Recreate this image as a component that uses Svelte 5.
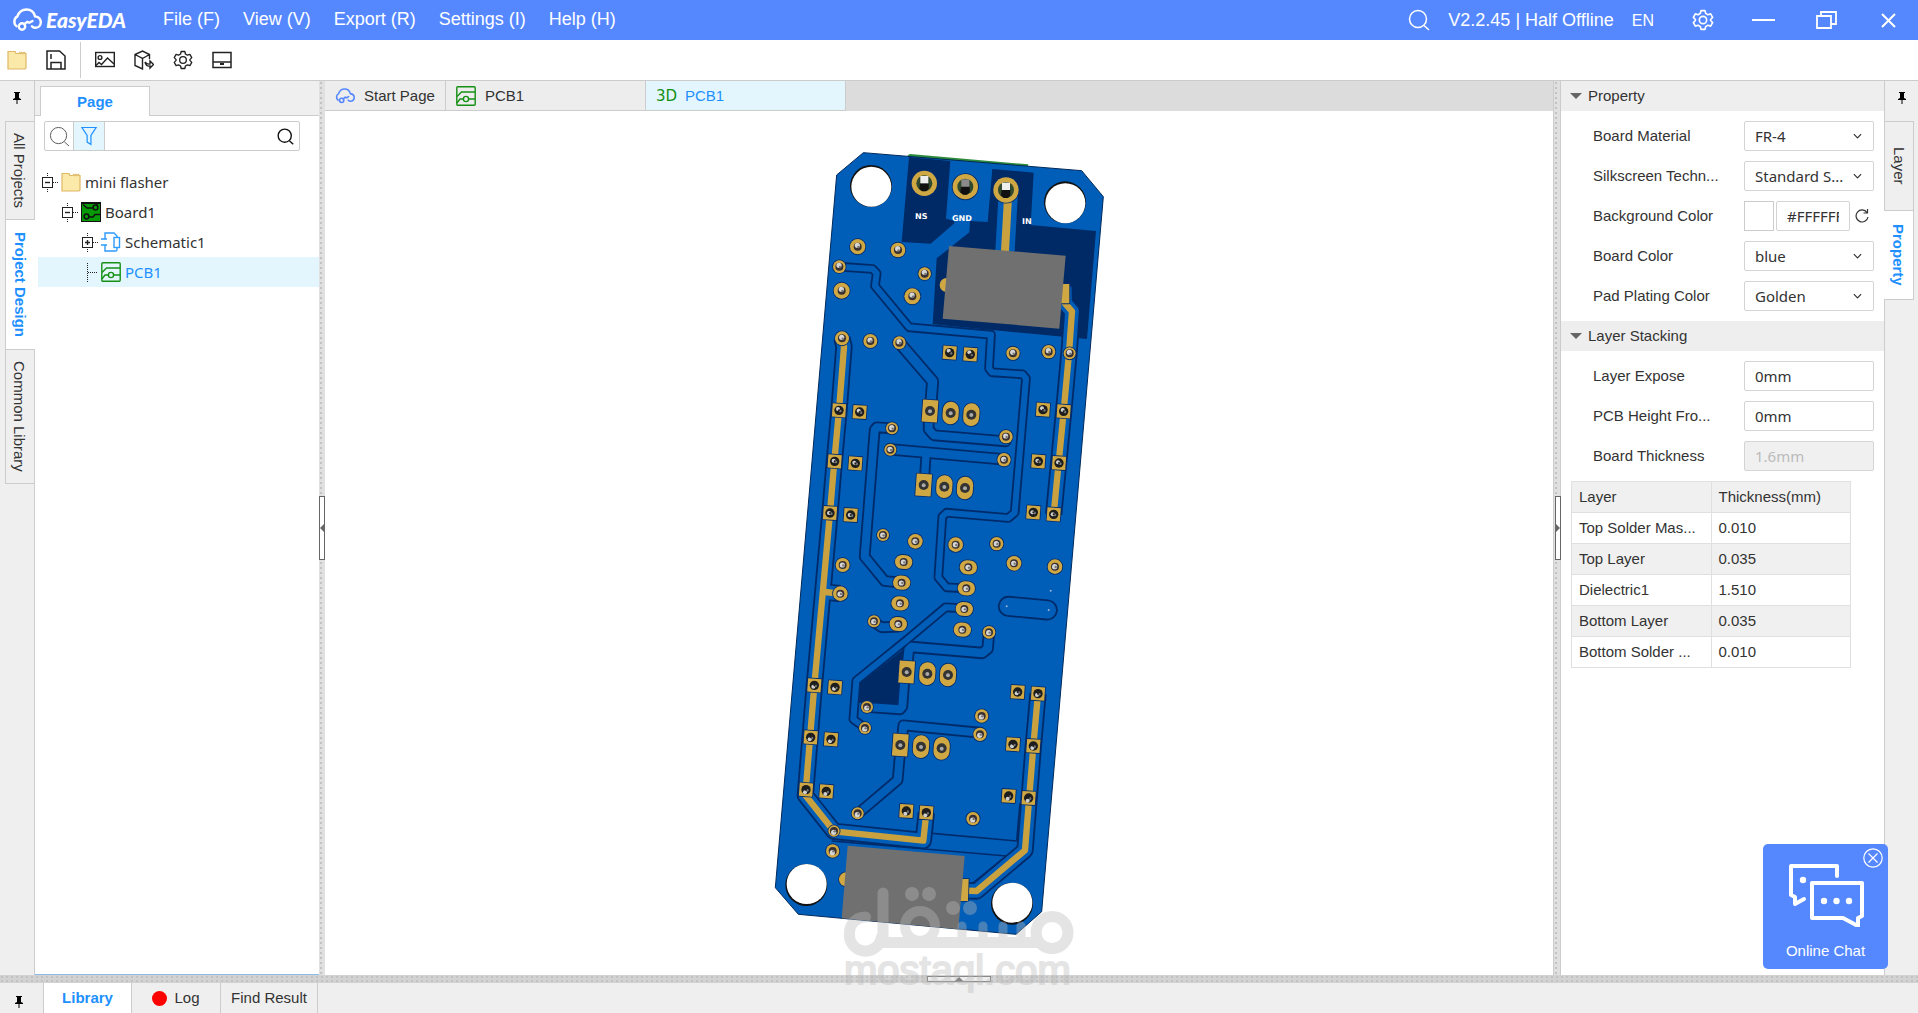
<script>
  const menus = ['File (F)', 'View (V)', 'Export (R)', 'Settings (I)', 'Help (H)'];

  const boardFields = [
    { id: 'material', label: 'Board Material', value: 'FR-4' },
    { id: 'silk', label: 'Silkscreen Techn...', value: 'Standard S...' },
    { id: 'background', label: 'Background Color', color: '#FFFFFF' },
    { id: 'color', label: 'Board Color', value: 'blue' },
    { id: 'plating', label: 'Pad Plating Color', value: 'Golden' }
  ];
  const stackFields = [
    { id: 'expose', label: 'Layer Expose', value: '0mm' },
    { id: 'height', label: 'PCB Height Fro...', value: '0mm' },
    { id: 'thickness', label: 'Board Thickness', value: '1.6mm', disabled: true }
  ];
  const layers = [
    ['Top Solder Mas...', '0.010'],
    ['Top Layer', '0.035'],
    ['Dielectric1', '1.510'],
    ['Bottom Layer', '0.035'],
    ['Bottom Solder ...', '0.010']
  ];

  // Board geometry, in thirds of a pixel
  const traces = [
    { w: 24, p: '238,380 338,387 350,400 345,438 448,562 693,584 687,685 696,697 788,703 798,715 764,1118 745,1134 560,1118 547,1130 535,1312 560,1342 618,1345' },
    { w: 34, p: '418,608 518,724 512,800' },
    { w: 30, p: '506,800 506,868 522,886 737,904' },
    { w: 30, p: '396,865 350,862 344,870 314,1250 374,1323 425,1328' },
    { w: 32, p: '391,928 732,958' },
    { w: 28, p: '498,945 492,1040' },
    { w: 24, p: '610,1405 557,1402 440,1500 289,1622 280,1738 315,1763' },
    { w: 32, p: '687,1475 683,1526 667,1539 455,1521 446,1530 440,1590' },
    { w: 30, p: '433,1620 427,1700 420,1708 320,1701' },
    { w: 30, p: '660,1778 430,1756 424,1815' },
    { w: 30, p: '420,1840 413,1920 295,2020' },
    { w: 30, p: '345,1448 365,1462 415,1460' },
    { w: 58, p: '745,1399 862,1410' }
  ];
  const goldTraces = [
    '246,595 252,620 237,811 223,963 210,1118 163,1636 136,1966 222,2074 490,2102 499,2018',
    '195,1356 240,1361',
    '914,440 915,490 936,514 927,640 911,814 881,1123',
    '834,1661 820,1818 795,2131 650,2253 615,2252'
  ];
  const ground = [
    '517,2000 517,2080 770,2103 780,1990',
    '215,2103 740,2148 640,2228'
  ];
  const vias = [
    [293,320,23],[414,330,22],[238,380,19],[245,452,24],[494,401,19],[457,469,24],[246,595,21],[331,603,21],[418,608,19],
    [759,640,20],[866,635,20],[929,640,18],[396,865,18],[391,929,18],[738,890,20],[732,959,20],[369,1185,18],[466,1204,22],
    [587,1214,22],[710,1211,20],[762,1270,22],[885,1280,22],[248,1275,21],[241,1361,22],[342,1444,18],[687,1477,19],
    [321,1701,18],[315,1764,18],[665,1728,20],[660,1783,20],[293,2020,18],[639,2036,20],[222,2073,17],[218,2133,20]
  ];
  const squares = [
    [569,638],[631,643],[237,811],[299,816],[849,809],[911,814],[224,964],[286,970],[835,964],[897,969],[210,1119],[272,1125],
    [820,1117],[881,1123],[163,1636],[225,1642],[152,1792],[213,1798],[138,1949],[199,1954],[773,1656],[834,1661],[759,1813],
    [820,1818],[746,1968],[806,1974],[439,2013],[499,2018]
  ];
  const wide = [[431,1266],[425,1328],[420,1390],[415,1452],[625,1282],[619,1345],[613,1407],[607,1469]];
  const tallSquare = [[510,813],[491,1035],[440,1596],[421,1815]];
  const tallRound = [[572,819],[634,824],[553,1040],[615,1044],[502,1601],[564,1605],[483,1820],[545,1825]];
  const pins = [[493,130],[616,140],[738,150]];
  const holes = [[333,138,-5],[915,187,-5],[139,2235,6],[756,2291,6]];
  // Lead ends drift from the top to the bottom of the drill with perspective
  const drift = (y) => Math.round((y - 1200) / 200);
</script>

{#snippet cloud()}
  <svg class="cloud" viewBox="0 0 30 24" fill="none" stroke="currentColor" stroke-width="2.4" stroke-linecap="round">
    <path d="M4.500 18.200A6 6 0 0 1 5.400 8.400C7 3.600 11 1.500 14.500 1.500c4.500 0 7.500 2.800 8.500 6.900 3.600.6 5.800 3 5.800 6 0 3.200-2.400 5.400-5.900 5.400-1.200 0-2.200-.6-3-1.500" />
    <circle cx="10" cy="18.500" r="3.200" />
    <path d="m12.300 16.300 3-2.400 2 .800 3.200-1.700" />
  </svg>
{/snippet}
{#snippet lens()}
  <svg class="lens" viewBox="0 0 22 22" fill="none" stroke="currentColor"><circle cx="10" cy="10" r="8.500" /><path d="m16 16.500 5 4.500" /></svg>
{/snippet}
{#snippet gear()}
  <svg class="gear" viewBox="0 0 24 24" fill="none" stroke="currentColor" stroke-linejoin="round">
    <path d="M9.800 1.800h4.400l.7 3 2.400 1.400 3-.9 2.200 3.800-2.200 2.400v1l2.200 2.400-2.200 3.800-3-.9-2.400 1.400-.7 3H9.800l-.7-3-2.400-1.400-3 .9-2.200-3.800 2.200-2.400v-1L1.500 9.100l2.200-3.800 3 .9 2.400-1.400z" />
    <circle cx="12" cy="12" r="4" />
  </svg>
{/snippet}
{#snippet pin()}
  <svg class="pin" viewBox="0 0 8 12"><path d="M1 0h6v1H6v5l2 1v1H4.500v4h-1V8H0V7l2-1V1H1z" /></svg>
{/snippet}
{#snippet folder()}
  <svg class="ico" viewBox="0 0 20 20"><path d="M1 1.500h7l1 2h3l.8-1 .8 1 .8-1 .8 1 .8-1 .8 1 .8-1 .7 1H19V18l-1 1H1z" fill="#fae9a8" stroke="#dfb765" stroke-width="1.200" /></svg>
{/snippet}
{#snippet pcb()}
  <svg class="ico" viewBox="0 0 20 20" fill="none" stroke="#159015" stroke-width="1.400"><rect x=".8" y=".8" width="18.400" height="18.400" rx="1" /><path d="M1 10.500 5.500 6H19M1 17l3-4h3.500M12.500 13H19" /><circle cx="10" cy="13" r="2.600" /></svg>
{/snippet}
{#snippet toggle(open)}
  <button class="toggle" aria-label={open ? 'Collapse' : 'Expand'}>
    <svg viewBox="0 0 17 19" fill="none" stroke="#222"><path d="M6.500 0v19M12 9.500h5" stroke-dasharray="1 1" /><rect x="1.500" y="4.500" width="10" height="10" fill="#fff" /><path d={open ? 'M4 9.500h5' : 'M4 9.500h5M6.500 7v5'} stroke-width="1.400" /></svg>
  </button>
{/snippet}
{#snippet bore(x, y, r)}
  <circle cx={x} cy={y} {r} fill="#3a3030" />
  <circle cx={x - 1} cy={y + drift(y)} r={r * 0.65} fill="#d6d6d6" />
  <circle cx={x + 2} cy={y + 1} r={r * 0.3} fill="#777" />
{/snippet}

<div class="app">
  <header class="titlebar">
    <div class="brand">{@render cloud()}<span>EasyEDA</span></div>
    <nav>{#each menus as m}<button>{m}</button>{/each}</nav>
    <div class="status">
      <button aria-label="Search">{@render lens()}</button>
      <span class="version">V2.2.45 | Half Offline</span>
      <button class="lang">EN</button>
    </div>
    <div class="window">
      <button aria-label="Preferences">{@render gear()}</button>
      <button aria-label="Minimize"><svg viewBox="0 0 24 24" stroke="#fff" stroke-width="2"><path d="M0 12h23" /></svg></button>
      <button aria-label="Restore"><svg viewBox="0 0 24 24" stroke="#fff" stroke-width="1.800" fill="none"><path d="M3 8h14v12H3zM7 8V4h15v12h-5" /></svg></button>
      <button aria-label="Close"><svg viewBox="0 0 24 24" stroke="#fff" stroke-width="2"><path d="m6 6 13 13M19 6 6 19" /></svg></button>
    </div>
  </header>

  <div class="toolbar">
    <button aria-label="Open">{@render folder()}</button>
    <button aria-label="Save"><svg class="ico" viewBox="0 0 20 20" fill="none" stroke="#222" stroke-width="1.500"><path d="M1 1h12.500L19 6v13H1zM5 19v-6.500h10V19M5 4v5" /></svg></button>
    <i class="rule"></i>
    <button aria-label="Export image"><svg class="ico" viewBox="0 0 20 20" fill="none" stroke="#222" stroke-width="1.400"><rect x=".7" y="2.500" width="18.600" height="14" /><circle cx="5" cy="7.500" r="1.900" /><path d="m1 15.500 3-3 2.500 2L12.500 8 19 14" /></svg></button>
    <button aria-label="Export 3D"><svg class="ico" viewBox="0 0 20 20" fill="none" stroke="#222" stroke-width="1.400"><path d="M15.500 9V4.500L8.500 1 1 4.500v11L8.500 19V8.500L1 4.500M8.500 8.500l7-4M11 12c1.500 2 3 2.500 5 2V11l3.500 3.500L16 18v-2c-2.500.5-4.500-.5-5-4" /></svg></button>
    <button aria-label="Settings">{@render gear()}</button>
    <button aria-label="Bottom panel"><svg class="ico" viewBox="0 0 20 20" fill="none" stroke="#222" stroke-width="1.500"><rect x="1" y="2.500" width="18" height="15" /><path d="M1 12h18" /><path d="M8 14h4" stroke-width="2" /></svg></button>
  </div>

  <main>
    <aside class="rail left">
      <button class="pinbox" aria-label="Pin panel">{@render pin()}</button>
      <button class="vtab projects">All Projects</button>
      <button class="vtab active design">Project Design</button>
      <button class="vtab library">Common Library</button>
      <div class="rest"></div>
    </aside>

    <section class="pages">
      <div class="pagetabs"><button>Page</button></div>
      <div class="search">
        <button aria-label="Find">{@render lens()}</button>
        <button class="filter" aria-label="Filter"><svg viewBox="0 0 18 20" fill="none" stroke="#1e90ff" stroke-width="1.300"><path d="M1 1h15l-5.500 8.500V19l-4-2.500v-7z" /></svg></button>
        <input aria-label="Search pages" />
        <button class="go" aria-label="Search pages now">{@render lens()}</button>
      </div>
      <ul class="tree">
        <li class="d0">{@render toggle(true)}{@render folder()}<span>mini flasher</span></li>
        <li class="d1">{@render toggle(true)}<svg class="ico" viewBox="0 0 20 20"><rect width="20" height="20" fill="#111" /><rect x="1" y="2" width="18" height="17" fill="#079a07" /><g fill="none" stroke="#111" stroke-width="1.500"><path d="M2 2.500 6 6h6M8 15h4l2-2.500h5M16 3V2" /><circle cx="14.500" cy="5.500" r="2.400" /><circle cx="5.500" cy="14.500" r="2.400" /></g></svg><span>Board1</span></li>
        <li class="d2">{@render toggle(false)}<svg class="ico" viewBox="0 0 20 20" fill="none" stroke="#2e9bff" stroke-width="1.400"><path d="M4 7V1h9l3 3v1.500M4 13v6h11l1-1v-2.500M0 7h6M0 13h6" /><rect x="13" y="5.500" width="5.500" height="10" /></svg><span>Schematic1</span></li>
        <li class="d2 selected"><svg class="branch" viewBox="0 0 17 19" fill="none" stroke="#222" stroke-dasharray="1 1"><path d="M6.500 0v19M7 9.500h10" /></svg>{@render pcb()}<span>PCB1</span></li>
      </ul>
    </section>

    <div class="split"><button class="grip" aria-label="Collapse left panel"><svg viewBox="0 0 5 10"><path d="M5 0v10L0 5z" fill="#666" /></svg></button></div>

    <section class="editor">
      <div class="doctabs">
        <button class="start">{@render cloud()}<span>Start Page</span></button>
        <button>{@render pcb()}<span>PCB1</span></button>
        <button class="current"><b>3D</b><span>PCB1</span></button>
      </div>
      <svg class="canvas" viewBox="325 111 1228 864" role="img" aria-label="3D view of the board">
        <g transform="translate(760 140) scale(.33333)" stroke-linejoin="round">
          <path d="M443 46 450 42 805 73 804 80 443 54z" fill="#2d8c3c" />
          <path d="M310 38 965 92l65 78L845 2315l-77 68-653-60-69-80L230 105z" fill="#005eb8" stroke="#00285a" stroke-width="3" />
          <g fill="#002a66">
            <path d="M447 51 571 63 558 236 582 242 583 250 512 311 425 306z" />
            <path d="M697 87 821 98 812 255 1008 273 981 597 518 553 530 355 628 277 630 243 683 246z" />
            <path d="M435 1525 300 1630 297 1688 417 1695 422 1620z" />
          </g>
          <g fill="none" stroke="#002b6a" stroke-width="5">{#each ground as p}<polyline points={p} />{/each}</g>
          <g fill="none" stroke="#002b6a">
            {#each traces as t}<polyline points={t.p} stroke-width={t.w + 5} stroke-linecap="round" />{/each}
            {#each goldTraces as p}<polyline points={p} stroke-width="52" />{/each}
          </g>
          <g fill="none" stroke="#005eb8">
            {#each traces as t}<polyline points={t.p} stroke-width={t.w - 6} stroke-linecap="round" />{/each}
            {#each goldTraces as p}<polyline points={p} stroke-width="41" />{/each}
            <path d="M745 155 735 334" stroke-width="58" />
          </g>
          <g fill="none" stroke="#c9a23f">
            {#each goldTraces as p}<polyline points={p} stroke-width="19" />{/each}
            <path d="M745 155 735 334" stroke-width="24" />
          </g>
          {#each holes as [x, y, d]}
            <circle cx={x} cy={y} r="63" fill="#111" /><circle cx={x + 1} cy={y - d / 2} r="60" fill="#fff" />
          {/each}
          <g fill="#d0a843" stroke="#002b6a" stroke-width="5" paint-order="stroke">
            <circle cx="560" cy="435" r="21" /><circle cx="258" cy="2218" r="21" />
            <path d="M905 432h23v58h-28zM603 2217h23l-2 66h-24z" />
            {#each pins as [x, y]}<circle cx={x} cy={y} r="38" />{/each}
            {#each vias as [x, y, r]}<circle cx={x} cy={y} {r} />{/each}
            {#each squares as [x, y]}<rect x={x - 20} y={y - 20} width="40" height="40" transform="rotate(4 {x} {y})" />{/each}
            {#each wide as [x, y]}<rect x={x - 26} y={y - 21} width="52" height="42" rx="21" transform="rotate(4 {x} {y})" />{/each}
            {#each tallSquare as [x, y]}<rect x={x - 23} y={y - 33} width="46" height="66" transform="rotate(4 {x} {y})" />{/each}
            {#each tallRound as [x, y]}<rect x={x - 24} y={y - 34} width="48" height="68" rx="24" transform="rotate(4 {x} {y})" />{/each}
          </g>
          {#each pins as [x, y], i}
            <circle cx={x} cy={y} r="24" fill="#30492f" /><path d="M{x - 13} {y}h26v16l-8 8h-12l-8-8z" fill="#111" /><rect x={x - 12} y={y - 22} width="24" height="22" fill={i === 1 ? '#8b8b8b' : '#eee'} />
          {/each}
          {#each vias as [x, y]}{@render bore(x, y, 12)}{/each}
          {#each squares as [x, y]}<circle cx={x} cy={y} r="14" fill="#1d1d1d" /><circle cx={x - 3} cy={y + drift(y) * 2} r="6" fill="#d0d0d0" /><circle cx={x + 4} cy={y + 2} r="4" fill="#777" /><circle cx={x} cy={y} r="3" fill="#222" />{/each}
          {#each wide as [x, y]}{@render bore(x, y, 12)}{/each}
          {#each [...tallSquare, ...tallRound] as [x, y]}<circle cx={x} cy={y} r="15" fill="#333" /><circle cx={x} cy={y + 1} r="6" fill="#a9a9a9" />{/each}
          <g fill="#707070"><path d="M567 318 917 347 898 566 548 536z" /><path d="M263 2117 614 2148 595 2368 245 2335z" /></g>
          <g fill="#9db4d0"><circle cx="872" cy="1352" r="3" /><circle cx="740" cy="1399" r="3" /><circle cx="866" cy="1410" r="3" /></g>
          <g class="silk"><text x="465" y="236">NS</text><text x="576" y="242">GND</text><text x="786" y="252">IN</text></g>
        </g>
      </svg>
    </section>

    <div class="split right"><button class="grip" aria-label="Collapse right panel"><svg viewBox="0 0 5 10"><path d="M0 0v10l5-5z" fill="#666" /></svg></button></div>

    <section class="props">
      <h2>Property</h2>
      <div class="fields">
        {#each boardFields as f}
          <div class="field">
            <label for={f.id}>{f.label}</label>
            {#if f.color}
              <button class="swatch" aria-label="Pick color"></button>
              <input class="hex" id={f.id} value={f.color} />
              <button class="reset" aria-label="Reset color"><svg viewBox="0 0 14 14" fill="none" stroke="#333" stroke-width="1.200"><path d="M12 3.500A6 6 0 1 0 13 8M12.500 0v4h-4" /></svg></button>
            {:else}
              <div class="drop"><select id={f.id}><option>{f.value}</option></select><svg viewBox="0 0 10 6" fill="none" stroke="#333" stroke-width="1.300"><path d="m1 1 4 4 4-4" /></svg></div>
            {/if}
          </div>
        {/each}
      </div>
      <h2>Layer Stacking</h2>
      <div class="fields">
        {#each stackFields as f}
          <div class="field"><label for={f.id}>{f.label}</label><input id={f.id} value={f.value} disabled={f.disabled} /></div>
        {/each}
      </div>
      <table>
        <thead><tr><th>Layer</th><th>Thickness(mm)</th></tr></thead>
        <tbody>{#each layers as [name, t]}<tr><td>{name}</td><td>{t}</td></tr>{/each}</tbody>
      </table>
    </section>

    <aside class="rail rightrail">
      <button class="pinbox" aria-label="Pin properties">{@render pin()}</button>
      <button class="vtab side">Layer</button>
      <button class="vtab side active">Property</button>
      <div class="rest"></div>
    </aside>
  </main>

  <div class="hsplit"><button aria-label="Expand bottom panel"><svg viewBox="0 0 8 4"><path d="M0 4 4 0l4 4z" fill="#666" /></svg></button></div>

  <footer>
    <button class="fpin" aria-label="Pin bottom panel">{@render pin()}</button>
    <button class="lib">Library</button>
    <button class="log"><i></i>Log</button>
    <button class="find">Find Result</button>
  </footer>

  <svg class="watermark" viewBox="840 885 238 128" aria-hidden="true">
    <g opacity=".38" fill="#bababa">
      <g fill="none" stroke="#bababa" stroke-width="11" stroke-linecap="round">
        <circle cx="1052" cy="932.500" r="16" />
        <path d="M865.500 917c-9 0-16 7-16 16a16 16 0 0 0 32 4" />
        <path d="M883 893v48" />
        <circle cx="920" cy="926" r="15" stroke-width="10" />
        <path d="M962 926v16M983 926v16M1003 926v16M1021 926v16" stroke-width="9" />
      </g>
      <path d="M878 937h164v11H876z" />
      <circle cx="912" cy="894" r="7" /><circle cx="929" cy="894" r="7" /><circle cx="953" cy="908" r="7" /><circle cx="970" cy="908" r="7" />
      <text x="844" y="984">mostaql.com</text>
    </g>
  </svg>

  <div class="chat">
    <button class="close" aria-label="Close chat"><svg viewBox="0 0 20 20" fill="none" stroke="#fff" stroke-width="1.200"><circle cx="10" cy="10" r="9.200" /><path d="m5.500 5.500 9 9M14.500 5.500l-9 9" /></svg></button>
    <button class="open">
      <svg viewBox="0 0 76 64" fill="none" stroke="#fff" stroke-width="4" stroke-linejoin="round" stroke-linecap="round"><path d="M49 13V3H3v29l4 2v7l9-5" /><path d="M24 20h50v33l-4 2v8l-15-8H24z" /><g fill="#fff" stroke="none"><circle cx="15" cy="17" r="3.200" /><circle cx="36" cy="38" r="3.200" /><circle cx="48.500" cy="38" r="3.200" /><circle cx="61" cy="38" r="3.200" /></g></svg>
      <span>Online Chat</span>
    </button>
  </div>
</div>

<style>
  :global(body) { margin: 0; }
  .app { position: relative; height: 100vh; display: flex; flex-direction: column; overflow: hidden; background: #fff; color: #333; font: 15px/20px "Liberation Sans", Arial, sans-serif; }
  .app * { box-sizing: border-box; }
  button { display: flex; align-items: center; justify-content: center; padding: 0; border: 0; background: none; color: inherit; font: inherit; }
  svg { display: block; flex: none; }
  .ico { width: 20px; height: 20px; }
  .pin { width: 8px; height: 12px; }

  .titlebar { flex: none; height: 40px; display: flex; align-items: center; background: #5588ff; color: #fff; font-size: 18px; }
  .brand { display: flex; align-items: center; gap: 4px; width: 163px; padding-left: 12px; font: italic 900 21px/24px Lato, sans-serif; }
  .brand .cloud { width: 30px; height: 24px; }
  nav { flex: 1; display: flex; gap: 23px; height: 37px; align-self: flex-start; }
  .status { display: flex; align-items: center; gap: 18px; }
  .version { height: 24px; line-height: 24px; }
  .status .lens { width: 22px; height: 22px; stroke-width: 1.5px; }
  .lang { font-size: 16px; height: 20px; padding-top: 2px; }
  .window { display: flex; gap: 38px; padding: 0 18px 0 38px; }
  .window svg { width: 24px; height: 24px; }
  .window .gear { width: 22px; height: 22px; stroke-width: 1.8px; }

  .toolbar { flex: none; height: 41px; display: flex; align-items: center; gap: 19px; padding: 0 7px; border-bottom: 1px solid #ccc; }
  .toolbar .gear { width: 20px; height: 20px; color: #222; stroke-width: 1.6px; }
  .rule { width: 1px; height: 36px; margin: 0 -5px; background: #ccc; }

  main { flex: 1; min-height: 0; display: flex; }
  .rail { flex: none; width: 35px; display: flex; flex-direction: column; background: #efefef; }
  .pinbox { height: 40px; padding-bottom: 6px; }
  .rail.left { padding-left: 5px; }
  .rail.left .pinbox, .rail.left .rest { margin-left: -5px; border-right: 1px solid #ccc; }
  .rest { flex: 1; }
  .vtab { writing-mode: vertical-rl; border: 1px solid #ccc; border-bottom: 0; }
  .left .vtab { padding-right: 2px; }
  .projects { height: 98px; }
  .design { height: 130px; }
  .library { height: 135px; border-bottom: 1px solid #ccc; }
  .vtab.active { background: #fff; color: #1e90ff; font-weight: bold; }
  .left .active { border-right: 0; }

  .pages { flex: none; width: 284px; display: flex; flex-direction: column; background: #fff; border-bottom: 1px solid #8dbde6; }
  .pagetabs { height: 35px; flex: none; padding: 5px 0 0 5px; background: #efefef; border-bottom: 1px solid #ccc; }
  .pagetabs button { width: 110px; height: 30px; background: #fff; border: 1px solid #ccc; border-bottom: 0; color: #1e90ff; font-weight: bold; }
  .search { flex: none; display: flex; width: 256px; height: 30px; margin: 5px 0 16px 9px; border: 1px solid #ccc; border-radius: 2px; }
  .search button { width: 28px; }
  .search .lens { width: 21px; height: 21px; color: #555; }
  .search .filter { width: 32px; background: #e3f6fe; border: solid #ccc; border-width: 0 1px; }
  .filter svg { width: 17px; height: 20px; }
  .search input { flex: 1; min-width: 0; border: 0; }
  .search .go .lens { width: 17px; height: 17px; color: #111; stroke-width: 1.8px; }
  .tree { margin: 0; padding: 0; list-style: none; font-family: "Noto Sans", sans-serif; }
  li { display: flex; align-items: center; height: 30px; margin-left: 3px; }
  li span { margin-left: 4px; }
  .toggle svg, .branch { width: 17px; height: 19px; margin-right: 3px; }
  .d0 { padding-left: 3px; }
  .d1 { padding-left: 23px; }
  .d2 { padding-left: 43px; }
  .selected { background: #e3f6fe; color: #1e90ff; }

  .split { flex: none; width: 6px; display: flex; align-items: center; justify-content: center; background: radial-gradient(circle at 2px 2px, #c2c2c2 1px, transparent 1px) 0 0 / 6px 5px #e0e0e0; }
  .split.right { width: 8px; padding-left: 1px; border: solid #ccc; border-width: 0 1px; }
  .grip { width: 6px; height: 64px; border: 1px solid #666; background: #fff; }
  .grip svg { width: 5px; height: 10px; }
  .editor { flex: 1; min-width: 0; display: flex; flex-direction: column; }
  .doctabs { flex: none; height: 30px; display: flex; background: #dcdcdc; }
  .doctabs button { width: 200px; justify-content: flex-start; gap: 9px; padding-left: 10px; background: #ededed; border: solid #ccc; border-width: 0 1px 1px 0; }
  .doctabs .start { width: 121px; }
  .doctabs .cloud { width: 20px; height: 16px; color: #5588ff; }
  .doctabs .current { background: #e3f6fe; color: #1e90ff; }
  .doctabs b { width: 20px; color: #159015; font-weight: normal; font-family: "DejaVu Sans", sans-serif; font-size: 15px; }
  .canvas { flex: 1; width: 100%; min-height: 0; }
  .silk text { fill: #fff; font: bold 24px "DejaVu Sans", sans-serif; }

  .props { flex: none; width: 323px; }
  h2 { display: flex; align-items: center; gap: 6px; height: 30px; margin: 0; padding-left: 9px; background: #eee; font-size: 15px; font-weight: normal; }
  h2::before { content: ""; border: solid transparent; border-width: 6px 6px 0; border-top-color: #666; }
  .fields { display: flex; flex-direction: column; gap: 10px; padding: 10px 10px 10px 32px; }
  .field { display: flex; align-items: center; height: 30px; }
  .field label { flex: none; width: 151px; }
  .field input, select { width: 100%; min-width: 0; height: 30px; padding: 0 10px; border: 1px solid #d4d4d4; border-radius: 2px; background: #fff; color: #333; font: 15px/20px "Noto Sans", sans-serif; }
  select { appearance: none; }
  .drop { flex: 1; display: grid; align-items: center; }
  .drop select, .drop svg { grid-area: 1 / 1; }
  .drop svg { width: 9px; height: 6px; justify-self: end; margin-right: 12px; pointer-events: none; }
  .field input:disabled { background: #f0f0f0; color: #bbb; }
  .swatch { flex: none; width: 30px; height: 30px; margin-right: 2px; border: 1px solid #ccc; }
  .field .hex { width: 74px; }
  .reset { width: 23px; }
  .reset svg { width: 14px; height: 14px; }
  table { width: 280px; margin-left: 10px; border-collapse: collapse; table-layout: fixed; }
  th, td { height: 31px; padding: 0 7px; border: 1px solid #e0e0e0; text-align: left; font-weight: normal; line-height: 20px; }
  thead, tbody tr:nth-child(even) { background: #f0f0f0; }

  .rightrail { width: 34px; padding-right: 4px; }
  .rightrail .pinbox, .rightrail .rest { margin-right: -4px; border-left: 1px solid #ccc; }
  .side { height: 89px; padding-right: 1px; }
  .side.active { height: 90px; border-left: 0; border-bottom: 1px solid #ccc; }

  .hsplit { flex: none; height: 8px; display: flex; align-items: center; justify-content: center; background: radial-gradient(circle at 2px 2px, #c2c2c2 1px, transparent 1px) 0 0 / 5px 4px #d2d2d2; }
  .hsplit button { width: 64px; height: 6px; border: 1px solid #888; background: #eee; }
  .hsplit svg { width: 8px; height: 4px; }
  footer { flex: none; height: 30px; display: flex; background: #efefef; }
  footer button { border-right: 1px solid #ccc; }
  .fpin { width: 44px; padding: 8px 6px 0 0; }
  .lib { width: 88px; background: #fff; color: #1e90ff; font-weight: bold; }
  .log { width: 89px; gap: 7px; }
  .log i { width: 15px; height: 15px; border-radius: 50%; background: #f00; }
  .find { width: 97px; }

  .watermark { position: absolute; left: 50%; bottom: 0; width: 238px; height: 128px; margin-left: -119px; pointer-events: none; }
  .watermark text { font: 40px "Liberation Sans", sans-serif; stroke: #bababa; stroke-width: 2px; stroke-linejoin: round; }
  .chat { position: absolute; right: 30px; bottom: 44px; width: 125px; height: 125px; border-radius: 5px; background: #5588ff; color: #fff; }
  .chat .close { position: absolute; top: 4px; right: 5px; }
  .close svg { width: 20px; height: 20px; }
  .open { width: 100%; height: 100%; flex-direction: column; gap: 14px; padding-top: 10px; }
  .open svg { width: 76px; height: 64px; }
</style>
